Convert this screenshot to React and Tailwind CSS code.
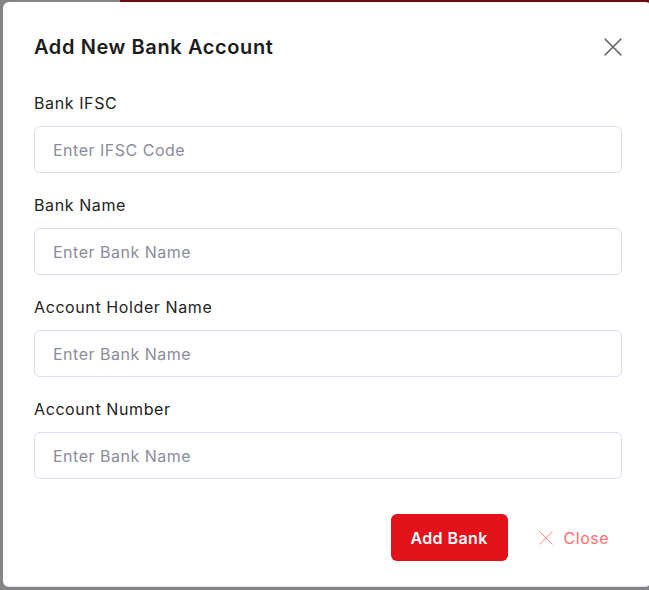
import { useState } from 'react'

const fields = [
  { label: 'Bank IFSC', placeholder: 'Enter IFSC Code' },
  { label: 'Bank Name', placeholder: 'Enter Bank Name' },
  { label: 'Account Holder Name', placeholder: 'Enter Bank Name' },
  { label: 'Account Number', placeholder: 'Enter Bank Name' },
]

function XIcon({ className, strokeWidth = 1.6 }) {
  return (
    <svg viewBox="0 0 24 24" fill="none" stroke="currentColor" strokeWidth={strokeWidth} strokeLinecap="round" className={className}>
      <path d="M1.5 1.5l21 21M22.5 1.5l-21 21" />
    </svg>
  )
}

export default function App() {
  const [values, setValues] = useState({})

  return (
    <div className="w-[649px] h-[590px] overflow-hidden bg-[#858585] font-['Inter',sans-serif]">
      <div className="h-[2px] bg-[#6e0b10] ml-[120px]" />
      <div className="ml-[3px] w-[648px] h-[585px] rounded-md bg-white border-b border-[#e4e3f3] pt-[31px] pl-[31px] pr-[29px]">
        <div className="flex items-center justify-between">
          <h2 className="text-[20px] leading-7 font-semibold text-[#1c1c1c] tracking-[0.6px]">Add New Bank Account</h2>
          <button className="text-[#6b6b6b] w-[18px] h-[18px]">
            <XIcon className="w-[18px] h-[18px]" strokeWidth={2} />
          </button>
        </div>

        <div className="mt-[30px] flex flex-col gap-5">
          {fields.map((f, i) => (
            <div key={i} className="flex flex-col gap-[11px]">
              <label className="text-[16px] leading-6 text-[#232323] tracking-[0.6px]">{f.label}</label>
              <input
                value={values[i] || ''}
                onChange={e => setValues({ ...values, [i]: e.target.value })}
                placeholder={f.placeholder}
                className="h-[47px] w-full rounded-md border border-[#dddcee] px-[18px] text-[16px] tracking-[0.5px] text-[#232323] placeholder:text-[#8b8c9c] outline-none"
              />
            </div>
          ))}
        </div>

        <div className="mt-[35px] flex justify-end items-center gap-[17px]">
          <button className="h-[47px] w-[117px] rounded-md bg-[#e3111a] text-white text-[16px] font-semibold tracking-[0.4px]">
            Add Bank
          </button>
          <button className="h-[47px] flex items-center gap-[11px] pl-[14px] pr-[13px] text-[#ff6f6f] text-[16px] tracking-[0.5px]">
            <XIcon className="w-[14px] h-[14px]" strokeWidth={1.4} />
            Close
          </button>
        </div>
      </div>
    </div>
  )
}
